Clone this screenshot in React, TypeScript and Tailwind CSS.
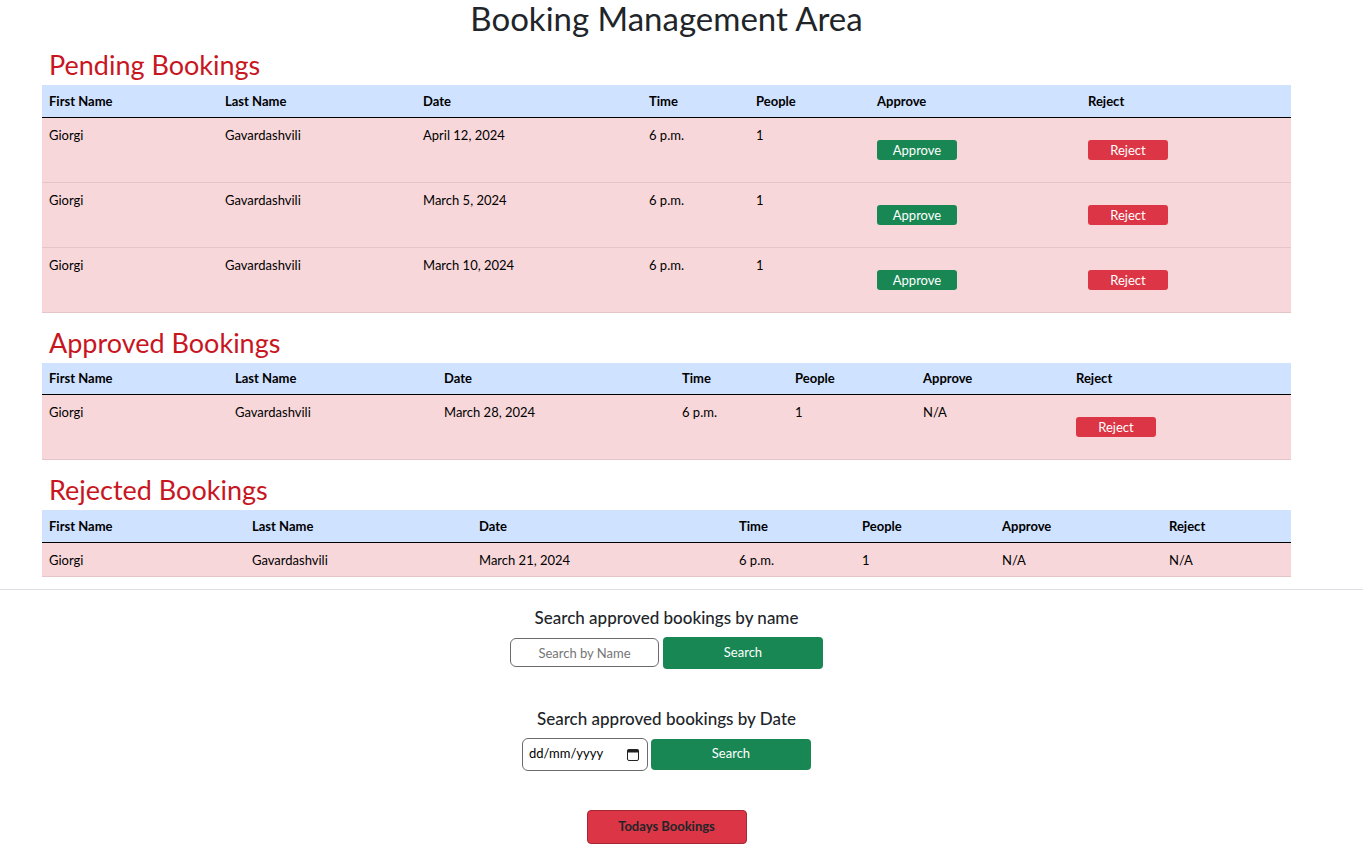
import React from "react";

type Booking = {
  first: string;
  last: string;
  date: string;
  time: string;
  people: number;
};

const pending: Booking[] = [
  { first: "Giorgi", last: "Gavardashvili", date: "April 12, 2024", time: "6 p.m.", people: 1 },
  { first: "Giorgi", last: "Gavardashvili", date: "March 5, 2024", time: "6 p.m.", people: 1 },
  { first: "Giorgi", last: "Gavardashvili", date: "March 10, 2024", time: "6 p.m.", people: 1 },
];

const approved: Booking[] = [
  { first: "Giorgi", last: "Gavardashvili", date: "March 28, 2024", time: "6 p.m.", people: 1 },
];

const rejected: Booking[] = [
  { first: "Giorgi", last: "Gavardashvili", date: "March 21, 2024", time: "6 p.m.", people: 1 },
];

const headers = ["First Name", "Last Name", "Date", "Time", "People", "Approve", "Reject"];

function SmallBtn({ kind, label }: { kind: "ok" | "no"; label: string }) {
  return (
    <button
      className={
        kind === "ok"
          ? "h-[20px] w-[80px] rounded-[3px] bg-[#198754] text-[13px] leading-[20px] text-white"
          : "h-[20px] w-[80px] rounded-[3px] bg-[#dc3545] text-[13px] leading-[20px] text-white"
      }
    >
      {label}
    </button>
  );
}

function BookingTable({
  rows,
  widths,
  mode,
}: {
  rows: Booking[];
  widths: number[];
  mode: "pending" | "approved" | "rejected";
}) {
  const tall = mode !== "rejected";
  return (
    <table className="w-[1249px] table-fixed border-collapse text-[13px]">
      <colgroup>
        {widths.map((w, i) => (
          <col key={i} style={{ width: w }} />
        ))}
      </colgroup>
      <thead>
        <tr className="h-[32px] border-b border-black bg-[#cfe2ff]">
          {headers.map((h) => (
            <th key={h} className="px-[7px] pt-[1px] text-left align-middle font-bold text-black">
              {h}
            </th>
          ))}
        </tr>
      </thead>
      <tbody>
        {rows.map((r, i) => (
          <tr
            key={i}
            className={
              tall
                ? "h-[65px] border-b border-[#e6c5c8] bg-[#f8d7da] text-black"
                : "h-[34px] border-b border-[#e6c5c8] bg-[#f8d7da] text-black"
            }
          >
            <td className="px-[7px] pt-[7px] align-top leading-[20px]">{r.first}</td>
            <td className="px-[7px] pt-[7px] align-top leading-[20px]">{r.last}</td>
            <td className="px-[7px] pt-[7px] align-top leading-[20px]">{r.date}</td>
            <td className="px-[7px] pt-[7px] align-top leading-[20px]">{r.time}</td>
            <td className="px-[7px] pt-[7px] align-top leading-[20px]">{r.people}</td>
            {mode === "pending" && (
              <>
                <td className="px-[7px] pt-[22px] align-top">
                  <SmallBtn kind="ok" label="Approve" />
                </td>
                <td className="px-[7px] pt-[22px] align-top">
                  <SmallBtn kind="no" label="Reject" />
                </td>
              </>
            )}
            {mode === "approved" && (
              <>
                <td className="px-[7px] pt-[7px] align-top leading-[20px]">N/A</td>
                <td className="px-[7px] pt-[22px] align-top">
                  <SmallBtn kind="no" label="Reject" />
                </td>
              </>
            )}
            {mode === "rejected" && (
              <>
                <td className="px-[7px] pt-[7px] align-top leading-[20px]">N/A</td>
                <td className="px-[7px] pt-[7px] align-top leading-[20px]">N/A</td>
              </>
            )}
          </tr>
        ))}
      </tbody>
    </table>
  );
}

function SectionTitle({ text, top }: { text: string; top: string }) {
  return (
    <h2 className={`${top} pb-[3px] pl-[7px] text-[27px] leading-[34px] text-[#c8161f]`}>
      {text}
    </h2>
  );
}

export default function App() {
  return (
    <div className="min-h-screen bg-white font-['Lato',sans-serif] text-[#212529]">
      <div className="w-[1333px]">
        <h1 className="h-[40px] text-center text-[33px] leading-[36px]">
          Booking Management Area
        </h1>

        <div className="ml-[42px] w-[1249px]">
          <SectionTitle text="Pending Bookings" top="pt-[8px]" />
          <BookingTable
            rows={pending}
            mode="pending"
            widths={[176, 198, 226, 107, 121, 211, 210]}
          />
          <SectionTitle text="Approved Bookings" top="pt-[13px]" />
          <BookingTable
            rows={approved}
            mode="approved"
            widths={[186, 209, 238, 113, 128, 153, 222]}
          />
          <SectionTitle text="Rejected Bookings" top="pt-[13px]" />
          <BookingTable
            rows={rejected}
            mode="rejected"
            widths={[203, 227, 260, 123, 140, 167, 129]}
          />
        </div>
      </div>

      <hr className="mt-[12px] border-t border-[#dedde4]" />

      <div className="flex w-[1333px] flex-col items-center">
        <p className="mt-[16px] text-[17px] leading-[24px] font-medium">
          Search approved bookings by name
        </p>
        <div className="mt-[7px] flex items-center gap-[4px]">
          <input
            placeholder="Search by Name"
            className="h-[29px] w-[149px] rounded-[6px] border border-[#6b6b6b] text-center text-[13px] placeholder:text-[#757575]"
          />
          <button className="h-[32px] w-[160px] rounded-[4px] bg-[#198754] text-[13px] text-white">
            Search
          </button>
        </div>

        <p className="mt-[38px] text-[17px] leading-[24px] font-medium">
          Search approved bookings by Date
        </p>
        <div className="mt-[7px] flex items-center gap-[3px]">
          <div className="flex h-[33px] w-[126px] items-center justify-between rounded-[6px] border border-[#6b6b6b] pr-[8px] pl-[6px] text-[13px] text-black">
            <span>dd/mm/yyyy</span>
            <svg width="12" height="13" viewBox="0 0 12 13">
              <rect x="0.5" y="1.5" width="11" height="11" rx="1.5" fill="none" stroke="#222" />
              <rect x="0.5" y="1.5" width="11" height="3" fill="#222" />
              <rect x="2" y="5" width="8" height="6" fill="#fff" />
            </svg>
          </div>
          <button className="h-[31px] w-[160px] rounded-[4px] bg-[#198754] text-[13px] text-white">
            Search
          </button>
        </div>

        <button className="mt-[39px] mb-[7px] h-[34px] w-[160px] rounded-[4px] border border-[#a52834] bg-[#dc3545] text-[13px] font-bold text-[#212529]">
          Todays Bookings
        </button>
      </div>
    </div>
  );
}
